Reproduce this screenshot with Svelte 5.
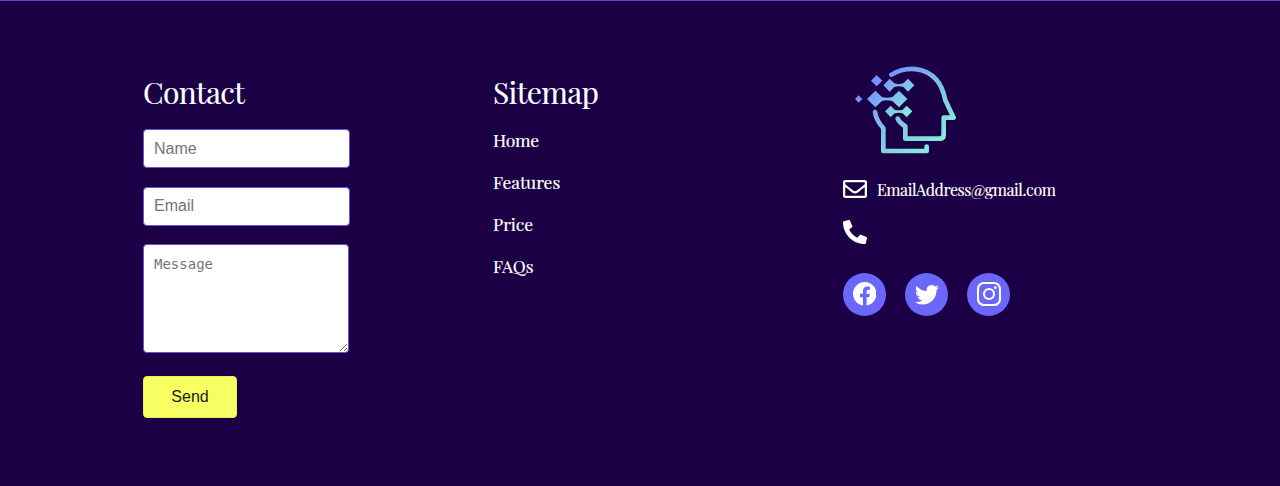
<script>
  const links = [
    { label: 'Home', spacing: -0.3 },
    { label: 'Features', spacing: -0.05 },
    { label: 'Price', spacing: -0.1 },
    { label: 'FAQs', spacing: -0.1 },
  ];
</script>

<footer>
  <form class="contact" onsubmit={(e) => e.preventDefault()}>
    <h2>Contact</h2>
    <input type="text" placeholder="Name" />
    <input type="email" placeholder="Email" />
    <textarea placeholder="Message"></textarea>
    <button type="submit">Send</button>
  </form>

  <nav>
    <h2>Sitemap</h2>
    {#each links as link}
      <a href="#top" style="letter-spacing: {link.spacing}px">{link.label}</a>
    {/each}
  </nav>

  <section>
    <svg class="logo" viewBox="0 0 360 330" width="120" height="110">
      <defs>
        <linearGradient id="tint" gradientUnits="userSpaceOnUse" x1="90" y1="75" x2="250" y2="275">
          <stop offset="0" stop-color="#7690ff" />
          <stop offset="0.4" stop-color="#80b7ea" />
          <stop offset="1" stop-color="#86e8dc" />
        </linearGradient>
        <linearGradient id="node" gradientUnits="userSpaceOnUse" x1="90" y1="85" x2="185" y2="175">
          <stop offset="0" stop-color="#7690ff" />
          <stop offset="1" stop-color="#86e8dc" />
        </linearGradient>
      </defs>
      <g fill="none" stroke="url(#tint)" stroke-width="14" stroke-linecap="round" stroke-linejoin="round">
        <path d="M139 59C186 32 241 37 274 74C291 93 296 111 301 136L326 188H296V239Q296 251 284 251H181V214Q164 204 158 191" />
        <path d="M90 171Q93 195 115 220V288H245V275" />
      </g>
      <g fill="url(#node)">
        <path d="M95 60L112 77L95 94L78 77Z" />
        <path d="M41 121L52 132L41 143L30 132Z" />
        <path d="M134 71L148 85Q161 90 175 85L189 71L208 91L189 110L175 96Q161 92 148 96L134 110L115 91Z" />
        <path d="M91 107L111 126Q126 130 142 126L162 107L187 132L162 157L142 138Q126 134 111 138L91 157L66 132Z" />
        <path d="M137 152L149 164Q161 168 173 164L185 152L202 169L185 187L173 175Q161 171 149 175L137 187L120 169Z" />
      </g>
    </svg>

    <div class="line">
      <svg viewBox="0 0 512 512" width="24" height="24" fill="#fff">
        <path d="M464 64H48C21.49 64 0 85.49 0 112v288c0 26.51 21.49 48 48 48h416c26.51 0 48-21.49 48-48V112c0-26.51-21.49-48-48-48zm0 48v40.805c-22.422 18.259-58.168 46.651-134.587 106.49-16.841 13.247-50.201 45.072-73.413 44.701-23.208.375-56.579-31.459-73.413-44.701C106.18 199.465 70.425 171.067 48 152.805V112h416zM48 400V214.398c22.914 18.251 55.409 43.862 104.938 82.646 21.857 17.205 60.134 55.186 103.062 54.955 42.717.231 80.509-37.199 103.053-54.947 49.528-38.783 82.032-64.401 104.947-82.653V400H48z" />
      </svg>
      <span>EmailAddress@gmail.com</span>
    </div>
    <div class="line phone">
      <svg viewBox="0 0 512 512" width="24" height="24" fill="#fff">
        <path d="M497.39 361.8l-112-48a24 24 0 0 0-28 6.9l-49.6 60.6A370.66 370.66 0 0 1 130.6 204.11l60.6-49.6a23.94 23.94 0 0 0 6.9-28l-48-112A24.16 24.16 0 0 0 122.6.61l-104 24A24 24 0 0 0 0 48c0 256.5 207.9 464 464 464a24 24 0 0 0 23.4-18.6l24-104a24.29 24.29 0 0 0-14.01-27.6z" />
      </svg>
    </div>

    <div class="social">
      <a class="dot" href="#top" aria-label="Facebook">
        <svg viewBox="0 0 16 16" width="23.5" height="23.5" fill="#fff">
          <path d="M16 8.049c0-4.446-3.582-8.05-8-8.05C3.58 0-.002 3.603-.002 8.05c0 4.017 2.926 7.347 6.75 7.951v-5.625h-2.03V8.05H6.75V6.275c0-2.017 1.195-3.131 3.022-3.131.876 0 1.791.157 1.791.157v1.98h-1.009c-.993 0-1.303.621-1.303 1.258v1.51h2.218l-.354 2.326H9.25V16c3.824-.604 6.75-3.934 6.75-7.951z" />
        </svg>
      </a>
      <a class="dot" href="#top" aria-label="Twitter">
        <svg viewBox="0 0 16 16" width="24" height="24" fill="#fff">
          <path d="M5.026 15c6.038 0 9.341-5.003 9.341-9.334 0-.14 0-.282-.006-.422A6.685 6.685 0 0 0 16 3.542a6.658 6.658 0 0 1-1.889.518 3.301 3.301 0 0 0 1.447-1.817 6.533 6.533 0 0 1-2.087.793A3.286 3.286 0 0 0 7.875 6.03a9.325 9.325 0 0 1-6.767-3.429 3.289 3.289 0 0 0 1.018 4.382A3.323 3.323 0 0 1 .64 6.575v.045a3.288 3.288 0 0 0 2.632 3.218 3.203 3.203 0 0 1-.865.115 3.23 3.23 0 0 1-.614-.057 3.283 3.283 0 0 0 3.067 2.277A6.588 6.588 0 0 1 .78 13.58a6.32 6.32 0 0 1-.78-.045A9.344 9.344 0 0 0 5.026 15z" />
        </svg>
      </a>
      <a class="dot" href="#top" aria-label="Instagram">
        <svg viewBox="0 0 24 24" width="24" height="24" fill="none" stroke="#fff" stroke-width="2.1">
          <rect x="1" y="1" width="22" height="22" rx="6" />
          <circle cx="12" cy="12" r="5" />
          <circle cx="18.3" cy="5.7" r="1.4" fill="#fff" stroke="none" />
        </svg>
      </a>
    </div>
  </section>
</footer>

<style>
  :global(body) {
    margin: 0;
    background: #1c0045;
  }
  footer {
    box-sizing: border-box;
    height: 486px;
    display: grid;
    grid-template-columns: 350px 350px 350px;
    padding-left: 143px;
    background: #1c0045;
    border-top: 1px solid #5b48c0;
    color: #fff;
    font-family: 'Playfair Display', 'Liberation Serif', serif;
  }
  form,
  nav,
  section {
    display: flex;
    flex-direction: column;
    align-items: flex-start;
  }
  form,
  nav {
    padding-top: 70px;
  }
  h2 {
    margin: 0 0 16.4px;
    height: 42px;
    font-size: 30px;
    line-height: 42px;
    font-weight: 400;
    letter-spacing: -0.65px;
    -webkit-text-stroke: 0.15px #fff;
  }
  input,
  textarea,
  button {
    box-sizing: border-box;
    margin: 0;
    border: 1px solid #6655dc;
    border-radius: 4px;
    font: 16px 'Liberation Sans', sans-serif;
    outline: none;
  }
  input {
    width: 207px;
    height: 39px;
    margin-bottom: 18.5px;
    padding: 0 10px;
    background: #fff;
  }
  textarea {
    width: 206px;
    height: 109px;
    padding: 10px;
    background: #fff;
    font: 14px/18px 'DejaVu Sans Mono', monospace;
  }
  input::placeholder,
  textarea::placeholder {
    color: #757575;
  }
  button {
    width: 94px;
    height: 42px;
    margin-top: 23px;
    padding: 0;
    border-color: #e9f157;
    background: #f7ff62;
    color: #1c1c1c;
  }
  nav a {
    height: 42px;
    font-size: 17.5px;
    line-height: 42px;
    color: #fff;
    text-decoration: none;
    -webkit-text-stroke: 0.2px #fff;
  }
  nav h2 {
    margin-bottom: 6px;
  }
  .logo {
    display: block;
    margin: 54px 0 12.4px 2px;
  }
  .line {
    display: flex;
    align-items: center;
    gap: 10px;
    height: 24px;
    font-size: 16px;
    letter-spacing: -0.42px;
    -webkit-text-stroke: 0.15px #fff;
  }
  .phone {
    margin-top: 18.6px;
  }
  .social {
    display: flex;
    gap: 19px;
    margin-top: 28.6px;
  }
  .dot {
    display: flex;
    align-items: center;
    justify-content: center;
    width: 43px;
    height: 43px;
    border-radius: 50%;
    background: #6c67fb;
  }
</style>
